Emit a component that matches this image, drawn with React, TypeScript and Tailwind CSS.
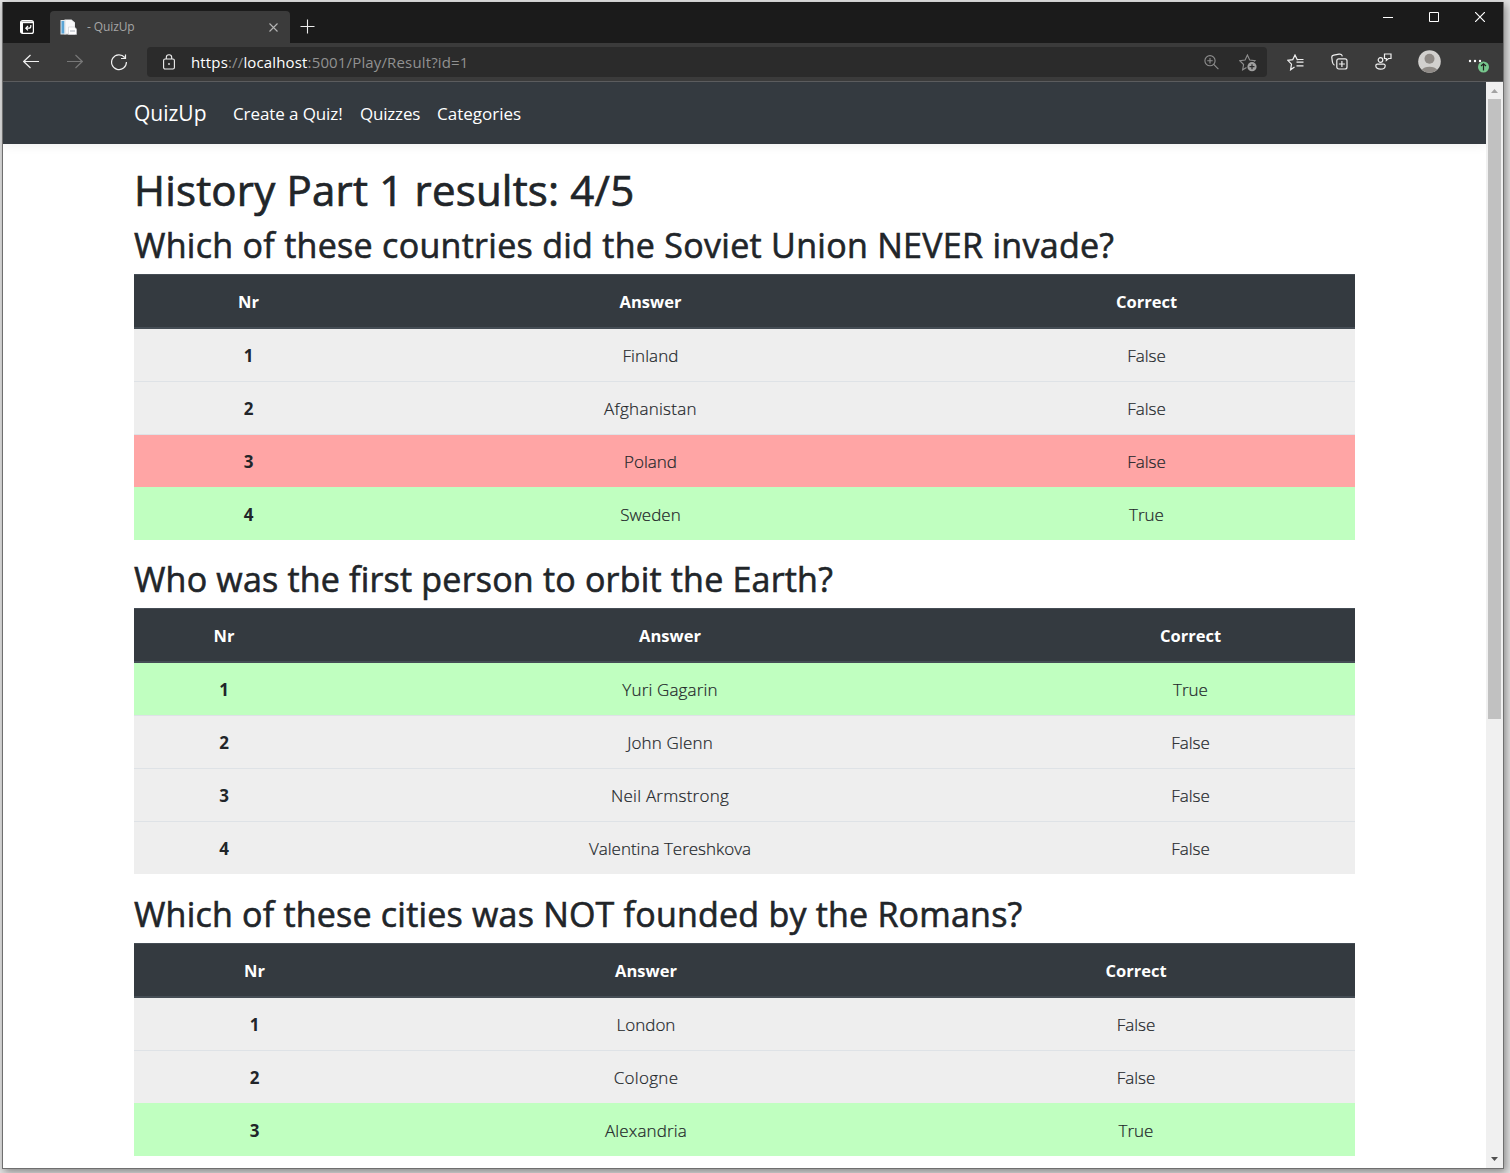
import React from "react";

type Tone = "plain" | "wrong" | "right";
type Row = { answer: string; correct: string; tone: Tone; tracking?: string };
type Question = { title: string; titleClass: string; cols: string; rows: Row[] };

const tones: Record<Tone, string> = {
  plain: "bg-[#eeeeee] border-[#dee2e6]",
  wrong: "bg-[#ffa5a5] border-[#dee2e6]",
  right: "bg-[#c0ffc0] border-[#c0ffc0]",
};

const questions: Question[] = [
  {
    title: "Which of these countries did the Soviet Union NEVER invade?",
    titleClass: "tracking-[0.29px]",
    cols: "grid-cols-[229px_575px_417px]",
    rows: [
      { answer: "Finland", correct: "False", tone: "plain", tracking: "tracking-[0.1px]" },
      { answer: "Afghanistan", correct: "False", tone: "plain", tracking: "tracking-[0.28px]" },
      { answer: "Poland", correct: "False", tone: "wrong" },
      { answer: "Sweden", correct: "True", tone: "right" },
    ],
  },
  {
    title: "Who was the first person to orbit the Earth?",
    titleClass: "tracking-[0.2px]",
    cols: "grid-cols-[180px_712px_329px]",
    rows: [
      { answer: "Yuri Gagarin", correct: "True", tone: "right", tracking: "tracking-[0.15px]" },
      { answer: "John Glenn", correct: "False", tone: "plain", tracking: "tracking-[0.15px]" },
      { answer: "Neil Armstrong", correct: "False", tone: "plain", tracking: "tracking-[0.25px]" },
      { answer: "Valentina Tereshkova", correct: "False", tone: "plain" },
    ],
  },
  {
    title: "Which of these cities was NOT founded by the Romans?",
    titleClass: "tracking-[0.21px]",
    cols: "grid-cols-[241px_542px_438px]",
    rows: [
      { answer: "London", correct: "False", tone: "plain" },
      { answer: "Cologne", correct: "False", tone: "plain", tracking: "tracking-[0.3px]" },
      { answer: "Alexandria", correct: "True", tone: "right", tracking: "tracking-[0.15px]" },
    ],
  },
];

function ResultTable({ q }: { q: Question }) {
  return (
    <div className="w-[1221px] text-center text-[17px] leading-[26px] text-[#212529]">
      <div className={`grid h-[55px] items-center border-t border-b-2 border-[#454d55] bg-[#343a40] pt-[2px] text-[16.500px] font-bold text-white ${q.cols}`}>
        <span>Nr</span>
        <span>Answer</span>
        <span>Correct</span>
      </div>
      {q.rows.map((r, i) => (
        <div key={r.answer} className={`grid items-center pt-[2px] ${i === 0 ? "h-[52px]" : "h-[53px] border-t"} ${tones[r.tone]} ${q.cols}`}>
          <span className="font-bold">{i + 1}</span>
          <span className={`font-light [-webkit-text-stroke:0.2px_#212529] ${r.tracking ?? ""}`}>{r.answer}</span>
          <span className="font-light [-webkit-text-stroke:0.2px_#212529]">{r.correct}</span>
        </div>
      ))}
    </div>
  );
}

export default function App() {
  return (
    <div className="h-[1173px] w-[1510px] overflow-hidden bg-[#e2e2e2] pt-[2px] pl-[2px] font-['Open_Sans',sans-serif]">
      <div className="flex h-[1167px] w-[1502px] flex-col border-r border-b border-l border-[#6f6f6f] bg-white shadow-[2px_3px_8px_rgba(0,0,0,0.4)]">
        {/* Tab strip */}
        <div className="flex h-[41px] shrink-0 bg-[#1b1b1b] text-white">
          <svg className="mt-[18px] ml-[17px] size-[14px]" viewBox="0 0 14 14" fill="none" stroke="currentColor" strokeWidth="1.2">
            <rect x=".6" y=".6" width="12.800" height="12.800" rx="2" />
            <path d="M1 2.300h12" strokeWidth="1.800" />
            <path d="M2 2v11" strokeWidth="2" />
            <path d="M10.800 5v1.200a2 2 0 0 1-2 2H6M8 6L5.800 8.200 8 10.400" />
          </svg>
          <div className="mt-[9px] ml-4 flex h-8 w-[240px] items-center rounded-t-[4px] bg-[#3b3b3b]">
            <svg className="ml-[10px] h-4 w-[17px]" viewBox="0 0 17 16">
              <path d="M.5 1h5v14.500h-5z" fill="#dfe6ec" />
              <path d="M1.500 2h3v12.500h-3z" fill="#5aa5d6" />
              <path d="M4.500.5h7L15 3.500v12H4.500z" fill="#e9eaec" />
              <path d="M6 1h5l3 3v10H6z" fill="#f8f8fa" />
              <path d="M8.500 8h6l2 2v5.500h-8z" fill="#ffffff" stroke="#c9cbd0" strokeWidth=".6" />
              <path d="M10 11h5v2h-5z" fill="#d3d6dc" />
            </svg>
            <span className="ml-2.5 text-[12px] tracking-[-0.1px] text-[#a5a5a5]">- QuizUp</span>
            <svg className="mr-3 ml-auto size-[9px]" viewBox="0 0 9 9" stroke="#b5b5b5" strokeWidth="1.100">
              <path d="M.5.5l8 8M8.500.5l-8 8" />
            </svg>
          </div>
          <svg className="mt-[17px] ml-[10px] size-[15px]" viewBox="0 0 15 15" stroke="#ececec" strokeWidth="1.100">
            <path d="M7.500.5v14M.5 7.500h14" />
          </svg>
          <div className="mt-[9px] mr-[18px] ml-auto flex h-3 items-center gap-9">
            <svg className="size-[10px]" viewBox="0 0 10 10" stroke="white"><path d="M0 5.500h10" /></svg>
            <svg className="size-[10px]" viewBox="0 0 10 10" stroke="white" fill="none"><path d="M.5.5h9v9h-9z" /></svg>
            <svg className="size-[10px]" viewBox="0 0 10 10" stroke="white" strokeWidth="1.200"><path d="M0 0l10 10M10 0L0 10" /></svg>
          </div>
        </div>

        {/* Toolbar */}
        <div className="flex h-[39px] shrink-0 items-center border-b border-[#5b5c5e] bg-[#3b3b3b] text-[#f0f0f0]">
          <svg className="ml-5 h-4 w-4" viewBox="0 0 16 16" fill="none" stroke="currentColor" strokeWidth="1.200"><path d="M7.500 1L.7 7.500l6.800 6.500M.7 7.500H16" /></svg>
          <svg className="ml-7 h-4 w-4 text-[#777]" viewBox="0 0 16 16" fill="none" stroke="currentColor" strokeWidth="1.200"><path d="M8.500 1l6.800 6.500-6.800 6.500M0 7.500h15.300" /></svg>
          <svg className="ml-7 h-[17px] w-[17px]" viewBox="0 0 17 17" fill="none" stroke="currentColor" strokeWidth="1.200"><path d="M13.700 3.500A7.400 7.400 0 1 0 15.400 8M14.500 .5v4H10" /></svg>
          <div className="ml-[19px] flex h-[30px] w-[1120px] items-center rounded-[4px] bg-[#2b2b2b]">
            <svg className="mb-px ml-4 h-[16px] w-[12px]" viewBox="0 0 12 16" fill="none" stroke="currentColor" strokeWidth="1.100">
              <rect x=".6" y="5" width="10.800" height="10" rx="1.500" />
              <path d="M3.300 5V3.500a2.700 2.700 0 0 1 5.400 0V5" />
              <circle cx="6" cy="10" r=".7" fill="currentColor" strokeWidth=".5" />
            </svg>
            <span className="ml-4 text-[15px] tracking-[0.15px] text-[#919191]">
              <span className="text-white">https</span>://<span className="text-white">localhost</span>:5001/Play/Result?id=1
            </span>
            <svg className="mr-[20px] ml-auto size-[15px] text-[#8e8e8e]" viewBox="0 0 15 15" fill="none" stroke="currentColor" strokeWidth="1.100">
              <circle cx="6" cy="5.700" r="5.100" /><path d="M9.700 9.400l4.700 4.700M6 3v5.400M3.300 5.700h5.400" />
            </svg>
            <svg className="mt-0.5 mr-2.5 h-[18px] w-[18px] text-[#8e8e8e]" viewBox="0 0 18 18" fill="none" stroke="currentColor" strokeWidth="1.100">
              <path d="M7.500 13.500L3.600 15.800l1-5.300L.8 6.700l5.300-.6L8.400 1l2.300 5.100 5.300.6-1 1" />
              <circle cx="13" cy="12.700" r="4.600" fill="#a0a0a0" stroke="none" />
              <path d="M13 10.200v5M10.500 12.700h5" stroke="#2b2b2b" strokeWidth="1.200" />
            </svg>
          </div>
          <svg className="ml-5 h-[17px] w-[17px]" viewBox="0 0 17 17" fill="none" stroke="currentColor" strokeWidth="1.200">
            <path d="M7.500 13L3.600 15.800l.9-5.600L.8 6.300l5-.7L8 1l2.200 4.600h1M9.500 8.200h7M9.500 5.500M10 5.500h6.500M9 9.500M9.500 11.800h7" />
          </svg>
          <svg className="mb-px ml-[27px] size-[17px]" viewBox="0 0 17 17" fill="none" stroke="currentColor" strokeWidth="1.200">
            <rect x="5.800" y="5.800" width="10.200" height="10.200" rx="2" />
            <path d="M10.900 8v6M7.900 11h6M3.500 12.200C2 11.500 1.700 10.500 1.400 9L.8 4.500C.6 3 1.200 2.400 2.800 2.100L8 1.100c1.800-.3 3 .4 3.300 2.300" />
          </svg>
          <svg className="mb-0.5 ml-[27px] size-[17px]" viewBox="0 0 17 17" fill="none" stroke="currentColor" strokeWidth="1.200">
            <circle cx="5.500" cy="7" r="2.300" />
            <path d="M2.300 11.200h6.400a1.500 1.500 0 0 1 1.500 1.500c0 2.200-1.900 3.500-4.700 3.500S.8 14.900.8 12.700a1.500 1.500 0 0 1 1.500-1.500zM9.500 1h6.500v4.500h-2.500l-2.200 2V5.500H9.500z" />
          </svg>
          <svg className="mb-px ml-[26px] size-[23px]" viewBox="0 0 23 23">
            <circle cx="11.500" cy="11.500" r="11.300" fill="#d2d0ce" />
            <circle cx="11.500" cy="8.800" r="5" fill="#8f8a86" />
            <path d="M3.800 19.800a8.500 5.500 0 0 1 15.400 0 11.300 11.300 0 0 1-15.400 0z" fill="#8f8a86" />
          </svg>
          <svg className="mt-[7px] ml-[27px] h-[21px] w-[22px]" viewBox="0 0 22 21">
            <circle cx="2" cy="6" r="1.200" fill="white" /><circle cx="7" cy="6" r="1.200" fill="white" /><circle cx="12" cy="6" r="1.200" fill="white" />
            <circle cx="15.500" cy="12" r="5.500" fill="#77c68d" />
            <path d="M15.500 15.500V9M13 11L15.500 8.700l2.500 2.300" stroke="#222" strokeWidth="1.200" fill="none" />
          </svg>
        </div>

        <div className="flex min-h-0 flex-1">
          <main className="w-[1483px] overflow-hidden bg-white">
            <nav className="flex h-[62px] items-center bg-[#343a40] pt-px pl-[131px] text-[17px] text-white shadow-[0_3px_9px_rgba(0,0,0,0.05)]">
              <span className="w-[99px] pt-px text-[21px]">QuizUp</span>
              <span className="w-[127px] pt-px tracking-[-0.1px]">Create a Quiz!</span>
              <span className="w-[77px] pt-px tracking-[-0.2px]">Quizzes</span>
              <span className="pt-px">Categories</span>
            </nav>
            <div className="pt-[20px] pl-[131px] whitespace-nowrap text-[#212529]">
              <h1 className="h-[61px] text-[42px] leading-[52px] font-medium tracking-[0.2px] [-webkit-text-stroke:0.7px_#212529]">History Part 1 results: 4/5</h1>
              <div className="flex flex-col">
                {questions.map((q, i) => (
                  <section key={q.title} className={i === 1 ? "mb-5" : "mb-[19px]"}>
                    <h2 className="h-[49px] text-[34px] leading-[40px] font-medium [-webkit-text-stroke:0.6px_#212529]"><span className={q.titleClass}>{q.title}</span></h2>
                    <ResultTable q={q} />
                  </section>
                ))}
              </div>
            </div>
          </main>
          <div className="flex w-[17px] flex-col items-center bg-[#f0f0f0]">
            <svg className="mt-[7px] h-1 w-[7px]" viewBox="0 0 7 4"><path d="M0 4l3.500-4L7 4z" fill="#a3a3a3" /></svg>
            <div className="mt-1.5 h-[620px] w-[13px] bg-[#c1c1c1]" />
            <svg className="mt-auto mb-[7px] h-1 w-[7px]" viewBox="0 0 7 4"><path d="M0 0l3.500 4L7 0z" fill="#505050" /></svg>
          </div>
        </div>
      </div>
    </div>
  );
}
